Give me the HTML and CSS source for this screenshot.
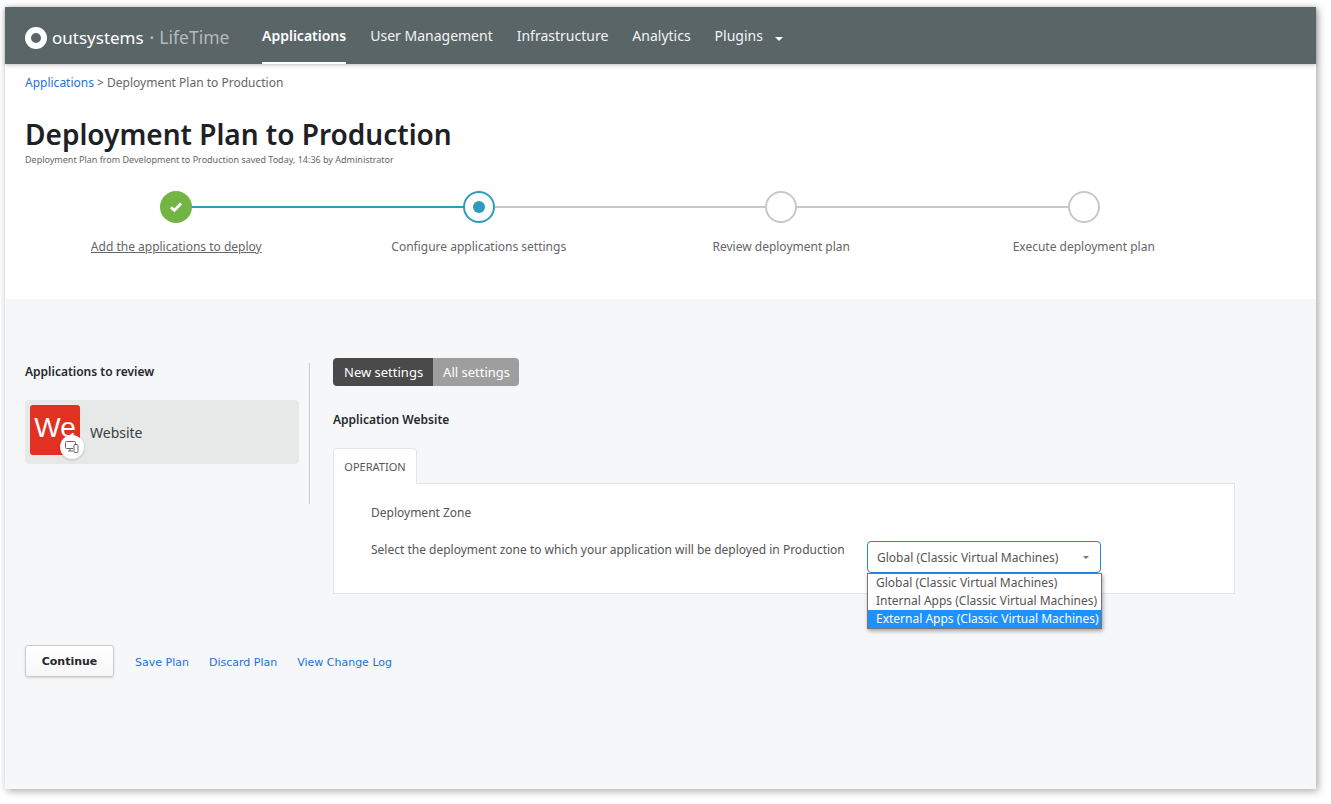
FILE: index.html
```html
<!DOCTYPE html>
<html lang="en">
<head>
<meta charset="UTF-8" />
<title>Deployment Plan to Production</title>
<link rel="stylesheet" href="styles.css">
</head>
<body>
  <div class="window">
    <header class="topbar">
      <div class="logo">
        <span class="logo-mark"></span>
        <span class="logo-name">outsystems</span>
        <span class="logo-product"><span class="logo-dot">•</span> LifeTime</span>
      </div>
      <nav class="nav">
        <a class="nav-item active">Applications</a>
        <a class="nav-item">User Management</a>
        <a class="nav-item">Infrastructure</a>
        <a class="nav-item">Analytics</a>
        <a class="nav-item">Plugins <span class="nav-caret"></span></a>
      </nav>
    </header>

    <section class="intro">
      <div class="breadcrumb"><a>Applications</a> &gt; Deployment Plan to Production</div>
      <h1>Deployment Plan to Production</h1>
      <div class="saved">Deployment Plan from Development to Production saved Today, 14:36 by Administrator</div>

      <div class="steps">
        <div class="step done">
          <span class="step-circle">
            <svg width="14" height="12" viewBox="0 0 14 12"><path d="M2 6.2 5.4 9.4 12 2.6" fill="none" stroke="#fff" stroke-width="2.8"/></svg>
          </span>
          <a class="step-label">Add the applications to deploy</a>
        </div>
        <div class="step current">
          <span class="step-circle"><span class="step-dot"></span></span>
          <span class="step-label">Configure applications settings</span>
        </div>
        <div class="step">
          <span class="step-circle"></span>
          <span class="step-label">Review deployment plan</span>
        </div>
        <div class="step">
          <span class="step-circle"></span>
          <span class="step-label">Execute deployment plan</span>
        </div>
      </div>
    </section>

    <main class="content">
      <div class="columns">
        <aside class="sidebar">
          <div class="side-title">Applications to review</div>
          <div class="app-row">
            <div class="app-icon">We
              <span class="app-badge">
                <svg width="14" height="12" viewBox="0 0 14 12" fill="none" stroke="#666" stroke-width="1">
                  <path d="M8 7.5H1.5a1 1 0 0 1-1-1V1.500a1 1 0 0 1 1-1h8a1 1 0 0 1 1 1V3"/>
                  <path d="M3 10H8M5 7.500V10"/>
                  <rect x="9" y="3.500" width="4" height="8" rx="0.8"/>
                </svg>
              </span>
            </div>
            <span class="app-name">Website</span>
          </div>
        </aside>

        <section class="settings">
          <div class="toggle">
            <span class="toggle-item on">New settings</span>
            <span class="toggle-item">All settings</span>
          </div>
          <div class="settings-title">Application Website</div>
          <div class="tab">OPERATION</div>
          <div class="panel">
            <div class="zone-title">Deployment Zone</div>
            <div class="zone-row">
              <label class="zone-label">Select the deployment zone to which your application will be deployed in Production</label>
              <div class="select-wrap">
                <div class="select">Global (Classic Virtual Machines)<span class="select-caret"></span></div>
                <ul class="options">
                  <li>Global (Classic Virtual Machines)</li>
                  <li>Internal Apps (Classic Virtual Machines)</li>
                  <li class="selected">External Apps (Classic Virtual Machines)</li>
                </ul>
              </div>
            </div>
          </div>
        </section>
      </div>

      <div class="actions">
        <button class="btn">Continue</button>
        <a>Save Plan</a>
        <a>Discard Plan</a>
        <a>View Change Log</a>
      </div>
    </main>
  </div>
</body>
</html>
```

FILE: styles.css
```css
html, body {
  height: 100%;
}
body {
  margin: 0;
  background: #fff;
  font-family: "Noto Sans", "Open Sans", sans-serif;
  color: #555;
  overflow: hidden;
}
a {
  color: #1f6fdc;
}

.window {
  width: 1311px;
  height: 782px;
  margin: 7px 0 0 5px;
  background: #f6f7f9;
  box-shadow: 2px 2px 8px rgba(0, 0, 0, 0.35);
  display: flex;
  flex-direction: column;
}

.topbar {
  height: 57px;
  flex: none;
  background: #5a6568;
  display: flex;
  padding-left: 20px;
  box-shadow: 0 1px 4px rgba(0, 0, 0, 0.25);
  position: relative;
}
.logo {
  width: 237px;
  display: flex;
  align-items: center;
  padding-top: 3px;
  color: #fff;
  font-size: 17px;
  box-sizing: border-box;
}
.logo-mark {
  width: 10px;
  height: 10px;
  border: 6px solid #fff;
  border-radius: 50%;
  margin: 1px 5px 0 0;
}
.logo-product {
  margin-left: 6px;
  color: #b4babc;
  font-size: 17.500px;
}
.logo-dot {
  font-size: 11px;
  vertical-align: 2px;
  margin-right: 1px;
}
.nav {
  display: flex;
  gap: 24px;
}
.nav-item {
  height: 55px;
  line-height: 57px;
  color: #f2f3f3;
  font-size: 14px;
}
.nav-item.active {
  color: #fff;
  font-weight: 600;
  border-bottom: 2px solid #fff;
}
.nav-caret {
  display: inline-block;
  margin-left: 8px;
  border: 4px solid transparent;
  border-top: 4px solid #fff;
  border-bottom: 0;
  vertical-align: 0;
}

.intro {
  height: 235px;
  flex: none;
  box-sizing: border-box;
  background: #fff;
  padding: 11px 20px 0;
}
.breadcrumb {
  font-size: 12px;
  line-height: 16px;
  color: #666;
}
h1 {
  margin: 25px 0 0;
  font-size: 28px;
  line-height: 36px;
  font-weight: 600;
  color: #1d2126;
}
.saved {
  font-size: 9px;
  line-height: 12px;
  margin-top: 2px;
  color: #666;
}

.steps {
  display: grid;
  grid-template-columns: repeat(4, 1fr);
  width: 1210px;
  margin-top: 25px;
}
.step {
  display: flex;
  flex-direction: column;
  align-items: center;
  position: relative;
}
.step::before {
  content: "";
  position: absolute;
  top: 15px;
  left: 50%;
  width: 100%;
  height: 2px;
  background: #c8c8c8;
}
.step:last-child::before {
  display: none;
}
.step.done::before {
  background: #2f9bbd;
}
.step-circle {
  position: relative;
  width: 32px;
  height: 32px;
  box-sizing: border-box;
  border: 2px solid #c8c8c8;
  border-radius: 50%;
  background: #fff;
  display: flex;
  align-items: center;
  justify-content: center;
}
.step.done .step-circle {
  border: 0;
  background: #72b544;
}
.step.current .step-circle {
  border-color: #2f9bbd;
}
.step-dot {
  width: 12px;
  height: 12px;
  border-radius: 50%;
  background: #2f9bbd;
}
.step-label {
  margin-top: 15px;
  font-size: 12px;
  line-height: 18px;
  color: #666;
}
.step.done .step-label {
  text-decoration: underline;
}

.content {
  flex: 1;
  padding: 59px 20px 0;
}
.columns {
  display: flex;
  height: 287px;
}
.sidebar {
  width: 285px;
  height: 141px;
  margin-top: 5px;
  box-sizing: border-box;
  border-right: 1px solid #ccc;
  padding-right: 10px;
}
.side-title {
  margin-top: 1px;
  font-size: 12px;
  font-weight: 600;
  line-height: 16px;
  color: #23282d;
}
.app-row {
  margin-top: 20px;
  height: 64px;
  border-radius: 4px;
  background: #e6e9e8;
  display: flex;
  align-items: center;
  padding-left: 5px;
}
.app-icon {
  position: relative;
  align-self: flex-start;
  width: 50px;
  height: 50px;
  margin: 5px 10px 0 0;
  border-radius: 3px;
  background: #e03123;
  color: #fff;
  font-size: 28px;
  line-height: 46px;
  text-align: center;
  font-family: "Liberation Sans", sans-serif;
}
.app-badge {
  position: absolute;
  left: 30px;
  top: 30px;
  width: 24px;
  height: 24px;
  border-radius: 50%;
  background: #fff;
  box-shadow: 0 1px 3px rgba(0, 0, 0, 0.2);
  display: flex;
  align-items: center;
  justify-content: center;
}
.app-name {
  font-size: 14px;
  color: #3a3f44;
  margin-top: 1px;
}

.settings {
  margin-left: 23px;
  width: 902px;
}
.toggle {
  display: inline-flex;
  border-radius: 4px;
  overflow: hidden;
  font-size: 13px;
  line-height: 28px;
  color: #fff;
}
.toggle-item {
  padding: 0 9px 0 10px;
  background: #9e9e9e;
}
.toggle-item.on {
  padding: 0 10px 0 11px;
  background: #4a4a4a;
}
.settings-title {
  margin-top: 26px;
  font-size: 12px;
  font-weight: 600;
  line-height: 16px;
  color: #23282d;
}
.tab {
  position: relative;
  margin-top: 20px;
  width: 84px;
  height: 36px;
  box-sizing: border-box;
  background: #fff;
  border: 1px solid #e2e4e6;
  border-bottom: 0;
  border-radius: 4px 4px 0 0;
  font-size: 11px;
  line-height: 36px;
  text-align: center;
  color: #555;
  z-index: 1;
  margin-bottom: -1px;
}
.panel {
  height: 111px;
  box-sizing: border-box;
  background: #fff;
  border: 1px solid #e2e4e6;
  padding: 21px 36px 0 37px;
}
.zone-title {
  font-size: 12px;
  line-height: 16px;
  color: #555;
}
.zone-row {
  display: flex;
  margin-top: 21px;
}
.zone-label {
  width: 496px;
  font-size: 12px;
  line-height: 16px;
  color: #555;
}
.select-wrap {
  position: relative;
  margin-top: -1px;
}
.select {
  width: 234px;
  height: 32px;
  box-sizing: border-box;
  background: #fff;
  border: 1px solid #2b7fe0;
  border-radius: 4px;
  padding-left: 9px;
  font-size: 12px;
  line-height: 31px;
  color: #555;
  position: relative;
}
.select-caret {
  position: absolute;
  right: 11px;
  top: 14px;
  border: 3px solid transparent;
  border-top: 3px solid #777;
  border-bottom: 0;
}
.options {
  position: absolute;
  top: 32px;
  left: 0;
  width: 235px;
  margin: 0;
  padding: 0;
  box-sizing: border-box;
  list-style: none;
  background: #fff;
  border: 1px solid #767676;
  box-shadow: 1px 2px 4px rgba(0, 0, 0, 0.35);
  font-size: 12px;
  line-height: 18px;
  color: #555;
  white-space: nowrap;
  z-index: 2;
}
.options li {
  padding-left: 8px;
}
.options .selected {
  background: #1e90ff;
  color: #fff;
}

.actions {
  display: flex;
  align-items: center;
  gap: 20px;
  font-family: "DejaVu Sans", sans-serif;
  font-size: 11px;
}
.actions a {
  margin-top: 2px;
}
.btn {
  width: 89px;
  height: 32px;
  margin-right: 1px;
  background: linear-gradient(#fff, #f7f7f8);
  border: 1px solid #ccc;
  border-radius: 3px;
  box-shadow: 0 1px 2px rgba(0, 0, 0, 0.15);
  font-family: "DejaVu Sans", sans-serif;
  font-size: 11px;
  font-weight: 700;
  color: #23282d;
}
```
